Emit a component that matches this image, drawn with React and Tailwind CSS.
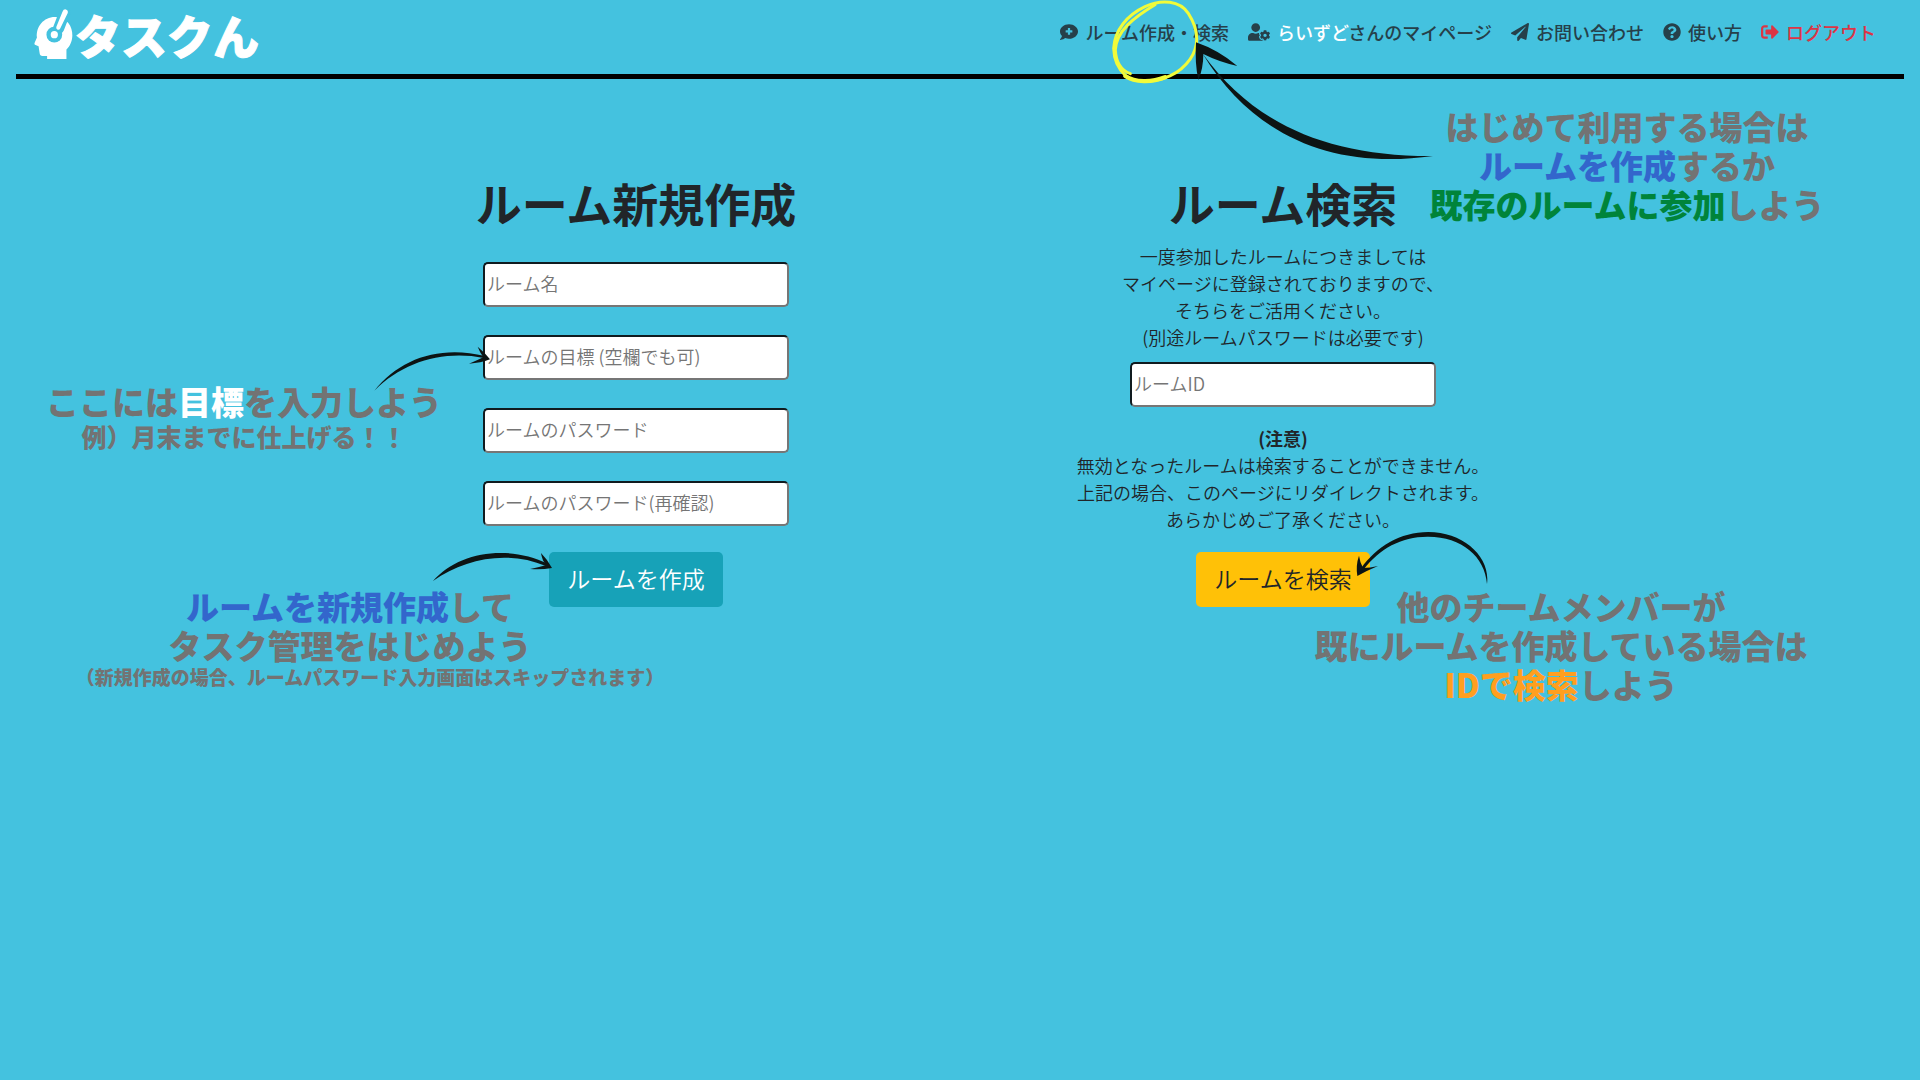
import {
  FaCommentMedical,
  FaUserCog,
  FaPaperPlane,
  FaQuestionCircle,
  FaSignOutAlt,
} from "react-icons/fa";

function Logo() {
  return (
    <a href="#top" className="flex items-center gap-[2px] text-white">
      <svg viewBox="98 22 122 158" className="h-[52px] w-10" aria-hidden="true">
        <path
          fill="#fff"
          d="M141 177V168H127Q119 168 118 158L115 138L104 134Q101 132 103 128L110 112C106 78 132 48 166 49C202 50 219 78 218 106C217 126 210 138 200 148V177Z"
        />
        <path d="M195 35L176 84" stroke="#44c2df" strokeWidth="34" strokeLinecap="round" />
        <circle cx="163" cy="103" r="24" fill="#44c2df" />
        <circle cx="163" cy="103" r="11" fill="#fff" />
        <path d="M188 33Q191 25 198 26Q206 28 204 37L181 84Q178 90 172 87Q168 85 169 80Z" fill="#fff" />
      </svg>
      <span className="text-[46px] leading-[54px] font-black [font-style:oblique_8deg] [-webkit-text-stroke:1px_#fff]">
        タスクん
      </span>
    </a>
  );
}

const links = [
  { icon: FaCommentMedical, label: "ルーム作成・検索" },
  { icon: FaUserCog, user: "らいずど", label: "さんのマイページ", wide: true },
  { icon: FaPaperPlane, label: "お問い合わせ" },
  { icon: FaQuestionCircle, label: "使い方" },
  { icon: FaSignOutAlt, label: "ログアウト", danger: true },
];

function NavLink({ icon: Icon, user, label, wide, danger }) {
  return (
    <a
      href="#nav"
      className={`flex items-center gap-[7px] ${danger ? "text-[#dc3545]" : "text-[#26404a]"}`}
    >
      <Icon className={wide ? "h-[18px] w-[22px]" : "size-[18px]"} />
      <span>
        {user && <span className="text-white">{user}</span>}
        {label}
      </span>
    </a>
  );
}

function Field({ label, type = "text" }) {
  return (
    <input
      type={type}
      aria-label={label}
      placeholder={label}
      className="h-[45px] w-[306px] rounded-[5px] border-2 border-t-[#101b1f] border-l-[#101b1f] border-r-[#767676] border-b-[#767676] bg-white px-[2px] pb-[3px] text-lg font-[350] text-[#212529] placeholder:text-[#757575]"
    />
  );
}

const note =
  "absolute text-center text-[33px] leading-[39px] font-black whitespace-nowrap text-[#737373]";

function NavCallout() {
  return (
    <>
      <svg
        viewBox="180 0 1020 510"
        className="pointer-events-none absolute top-0 right-[480px] h-[170px] w-[340px]"
        aria-hidden="true"
      >
        <g fill="none" stroke="#f1fb3a" strokeLinecap="round">
          <path strokeWidth="9" d="M345 14C285 50 228 92 226 150C228 190 246 212 271 221" />
          <path
            strokeWidth="9"
            d="M256 226C236 208 222 185 221 145C224 90 262 45 315 20C365 -4 420 2 445 40C478 92 476 140 450 178C420 220 370 245 310 244"
          />
          <path strokeWidth="13" d="M256 228C285 248 335 248 375 232" />
        </g>
        <g fill="#0d1414">
          <path d="M468 127Q535 150 592 198Q535 185 490 162Q490 205 475 240Q464 190 468 127Z" />
          <path d="M488 161C640 370 860 470 1179 468C880 510 640 410 488 161Z" />
        </g>
      </svg>
      <p className={`${note} top-[107px] right-[93px] w-[400px]`}>
        はじめて利用する場合は
        <br />
        <span className="text-[#3366cc]">ルームを作成</span>するか
        <br />
        <span className="text-[#00843a]">既存のルームに参加</span>しよう
      </p>
    </>
  );
}

function CreateCallouts() {
  return (
    <>
      <svg
        viewBox="1020 39 375 150"
        className="pointer-events-none absolute top-[264px] left-[58px] h-[50px] w-[125px]"
        fill="#0d1414"
        aria-hidden="true"
      >
        <path d="M1033 182C1110 85 1230 45 1365 78L1362 84C1240 60 1120 95 1033 182Z" />
        <path d="M1343 50Q1364 67 1380 88Q1352 99 1317 101Q1340 92 1360 82Q1350 68 1343 50Z" />
      </svg>
      <div className={`${note} top-[303px] -left-[268px] w-[400px]`}>
        <p>
          ここには<span className="text-white">目標</span>を入力しよう
        </p>
        <p className="text-[25px] leading-[30px]">例）月末までに仕上げる！！</p>
      </div>

      <svg
        viewBox="430 550 125 35"
        className="pointer-events-none absolute top-[471px] left-[118px] h-[35px] w-[125px]"
        fill="#0d1414"
        aria-hidden="true"
      >
        <path d="M433 581C458 552 508 544 548 564L546 566C508 550 465 558 433 581Z" />
        <path d="M541 553Q547 559 552 568Q541 570 530 569Q540 567 546 565Q542 560 541 553Z" />
      </svg>
      <div className={`${note} top-[508px] -left-[242px] w-[600px]`}>
        <p className="pr-10">
          <span className="text-[#3366cc]">ルームを新規作成</span>して
          <br />
          タスク管理をはじめよう
        </p>
        <p className="text-[19px] leading-[24px]">
          （新規作成の場合、ルームパスワード入力画面はスキップされます）
        </p>
      </div>
    </>
  );
}

function SearchCallout() {
  return (
    <>
      <svg
        viewBox="945 360 405 165"
        className="pointer-events-none absolute top-[451px] left-[395px] h-[55px] w-[135px]"
        fill="#0d1414"
        aria-hidden="true"
      >
        <path d="M1341 522C1352 440 1270 366 1165 366C1080 366 1010 410 963 475L970 479C1020 415 1085 379 1165 380C1265 380 1335 440 1341 522Z" />
        <path d="M957 437Q960 458 969 474Q990 474 1014 468Q980 482 952 498Q947 465 957 437Z" />
      </svg>
      <p className={`${note} top-[508px] left-[351px] w-[500px]`}>
        他のチームメンバーが
        <br />
        既にルームを作成している場合は
        <br />
        <span className="text-[#ff9f1f]">IDで検索</span>しよう
      </p>
    </>
  );
}

const heading = "text-[46px] leading-[50px] font-bold";
const button = "h-[55px] rounded-[5px] px-[18px] pb-[2px] text-[23px] font-[350]";

export default function App() {
  return (
    <div className="relative min-h-screen overflow-x-hidden bg-[#44c2df] font-['Noto_Sans_CJK_JP',sans-serif] text-[#212529]">
      <header className="px-4">
        <div className="flex h-[79px] items-start justify-between border-b-[5px] border-black pt-[7px] pr-7 pl-[17px]">
          <Logo />
          <nav className="flex h-[50px] items-center gap-[19px] text-lg font-medium">
            {links.map((link) => (
              <NavLink key={link.label} {...link} />
            ))}
          </nav>
        </div>
      </header>

      <main className="mx-auto grid max-w-[1296px] grid-cols-2 pb-10">
        <section className="relative pt-[98px]">
          <form className="flex flex-col items-center">
            <h1 className={heading}>ルーム新規作成</h1>
            <div className="mt-[35px] mb-[26px] flex flex-col gap-7">
              <Field label="ルーム名" />
              <Field label="ルームの目標 (空欄でも可)" />
              <Field label="ルームのパスワード" type="password" />
              <Field label="ルームのパスワード(再確認)" type="password" />
            </div>
            <button type="button" className={`${button} bg-[#17a2b8] text-white`}>
              ルームを作成
            </button>
          </form>
          <CreateCallouts />
        </section>

        <section className="relative pt-[98px]">
          <form className="flex flex-col items-center pr-[2px] text-center text-lg leading-[27px] font-[350]">
            <h1 className={heading}>ルーム検索</h1>
            <p className="mt-4 mb-[11px]">
              一度参加したルームにつきましては
              <br />
              マイページに登録されておりますので、
              <br />
              そちらをご活用ください。
              <br />
              (別途ルームパスワードは必要です)
            </p>
            <Field label="ルームID" />
            <p className="mt-[18px] mb-[19px]">
              <strong className="font-bold">(注意)</strong>
              <br />
              無効となったルームは検索することができません。
              <br />
              上記の場合、このページにリダイレクトされます。
              <br />
              あらかじめご了承ください。
            </p>
            <button type="button" className={`${button} bg-[#ffc107]`}>
              ルームを検索
            </button>
          </form>
          <SearchCallout />
        </section>
      </main>

      <NavCallout />
    </div>
  );
}
